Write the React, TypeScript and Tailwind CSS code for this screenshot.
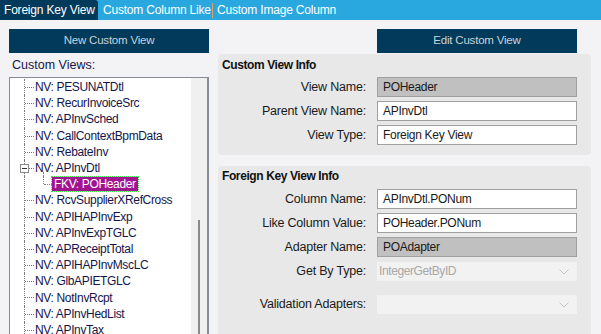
const font = { fontFamily: '"Liberation Sans", Arial, sans-serif' };

const treeItems: { text: string; kind?: 'parent' | 'child' }[] = [
  { text: 'NV: PESUNATDtl' },
  { text: 'NV: RecurInvoiceSrc' },
  { text: 'NV: APInvSched' },
  { text: 'NV: CallContextBpmData' },
  { text: 'NV: RebateInv' },
  { text: 'NV: APInvDtl', kind: 'parent' },
  { text: 'FKV: POHeader', kind: 'child' },
  { text: 'NV: RcvSupplierXRefCross' },
  { text: 'NV: APIHAPInvExp' },
  { text: 'NV: APInvExpTGLC' },
  { text: 'NV: APReceiptTotal' },
  { text: 'NV: APIHAPInvMscLC' },
  { text: 'NV: GlbAPIETGLC' },
  { text: 'NV: NotInvRcpt' },
  { text: 'NV: APInvHedList' },
  { text: 'NV: APInvTax' },
];

function Chevron() {
  return (
    <svg width="10" height="6" viewBox="0 0 10 6" className="absolute right-[8px] top-[7px]">
      <path d="M0.5 0.5 L5 5 L9.5 0.5" fill="none" stroke="#c4c4c4" strokeWidth="1" />
    </svg>
  );
}

function Field({ label, value, gray }: { label: string; value: string; gray?: boolean }) {
  return (
    <div className="flex items-center h-[20px] mb-[4px]">
      <div className="w-[149px] text-right pr-[1px] text-[12.5px] tracking-[-0.2px] text-[#1a1a1a]">{label}</div>
      <div
        className={`ml-[10px] w-[200px] h-[20px] border border-[#a0a0a0] px-[5px] flex items-center text-[12px] tracking-[-0.3px] text-[#1a1a1a] ${
          gray ? 'bg-[#c0c0c0]' : 'bg-white'
        }`}
      >
        {value}
      </div>
    </div>
  );
}

function SelectField({ label, value }: { label: string; value: string }) {
  return (
    <div className="flex items-center h-[20px]">
      <div className="w-[149px] text-right pr-[1px] text-[12.5px] tracking-[-0.2px] text-[#1a1a1a]">{label}</div>
      <div className="relative ml-[10px] w-[200px] h-[19px] bg-[#f2f2f2] px-[2px] flex items-center text-[12px] tracking-[-0.4px] text-[#a8a8a8]">
        {value}
        <Chevron />
      </div>
    </div>
  );
}

export default function App() {
  return (
    <div className="w-[601px] h-[334px] overflow-hidden bg-[#f3f3f5]" style={font}>
      {/* Tabs */}
      <div className="flex h-[20px] bg-[#29a8e0] text-white text-[12px] tracking-[-0.2px] whitespace-nowrap">
        <div className="flex-none w-[98px] bg-[#023a5b] rounded-tr-[3px] flex items-center pl-[4px]">Foreign Key View</div>
        <div className="flex-none w-[114px] flex items-center pl-[5px]">Custom Column Like</div>
        <div className="flex-none w-px h-[15px] mt-[3px] bg-[#d9a46d]" />
        <div className="flex-none flex items-center pl-[4px]">Custom Image Column</div>
      </div>

      <div className="flex pt-[9px]">
        {/* Left column */}
        <div className="ml-[9px] w-[200px] flex flex-col">
          <div className="h-[24px] bg-[#023a5b] text-[#c9d2d9] text-[11.5px] tracking-[-0.2px] flex items-center justify-center">
            New Custom View
          </div>
          <div className="h-[24px] pl-[3px] pt-[3px] text-[12.5px] text-[#15154a]">Custom Views:</div>
          <div className="relative h-[260px] bg-white border border-[#878b96] border-r-[2px] flex">
            <div className="flex-1 pt-[1px]">
              {treeItems.map((it, i) => (
                <div key={i} className="relative h-[16.2px] flex items-center text-[12px] tracking-[-0.35px] text-[#15154a] whitespace-nowrap">
                  <div className="absolute left-[14px] top-0 h-full border-l border-dotted border-[#7a7a7a]" />
                  {it.kind === 'child' ? (
                    <>
                      <div className="absolute left-[33px] top-0 h-[8px] border-l border-dotted border-[#7a7a7a]" />
                      <div className="absolute left-[34px] top-[8px] w-[8px] border-t border-dotted border-[#7a7a7a]" />
                      <div className="ml-[42px] h-[14px] px-[2px] flex items-center bg-[#a1138f] text-white outline outline-1 outline-dotted outline-[#3ddc4a]">
                        {it.text}
                      </div>
                    </>
                  ) : (
                    <>
                      <div className="absolute left-[15px] top-[8px] w-[9px] border-t border-dotted border-[#7a7a7a]" />
                      {it.kind === 'parent' && (
                        <div className="absolute left-[10px] top-[4px] w-[9px] h-[9px] bg-white border border-[#8a8a8a] flex items-center justify-center">
                          <div className="w-[5px] h-px bg-[#333]" />
                        </div>
                      )}
                      {it.kind === 'parent' && (
                        <div className="absolute left-[33px] top-[12px] h-[4px] border-l border-dotted border-[#7a7a7a]" />
                      )}
                      <div className="ml-[25px]">{it.text}</div>
                    </>
                  )}
                </div>
              ))}
            </div>
            {/* scrollbar */}
            <div className="w-[16px] bg-[#f0f0f0] relative">
              <div className="absolute left-[7px] top-[142px] w-[2px] h-[120px] bg-[#8a8a8a]" />
            </div>
          </div>
        </div>

        {/* Right column */}
        <div className="ml-[9px] w-[373px] flex flex-col">
          <div className="ml-[159px] w-[200px] h-[24px] bg-[#023a5b] text-[#c9d2d9] text-[11.5px] tracking-[-0.2px] flex items-center justify-center">
            Edit Custom View
          </div>
          <div className="mt-[1px] h-[101px] bg-[#e8e8e8] rounded-[4px] px-[4px] pt-[1px]">
            <div className="text-[12px] font-bold tracking-[-0.4px] text-[#111] h-[20px] flex items-center">Custom View Info</div>
            <div className="-ml-[4px] mt-[2px]">
              <Field label="View Name:" value="POHeader" gray />
              <Field label="Parent View Name:" value="APInvDtl" />
              <Field label="View Type:" value="Foreign Key View" />
            </div>
          </div>
          <div className="mt-[11px] h-[180px] bg-[#e8e8e8] rounded-[4px] px-[4px]">
            <div className="text-[12px] font-bold tracking-[-0.4px] text-[#111] h-[20px] flex items-center">Foreign Key View Info</div>
            <div className="-ml-[4px] mt-[3px]">
              <Field label="Column Name:" value="APInvDtl.PONum" />
              <Field label="Like Column Value:" value="POHeader.PONum" />
              <Field label="Adapter Name:" value="POAdapter" gray />
              <div className="mt-[1px]">
                <SelectField label="Get By Type:" value="IntegerGetByID" />
              </div>
              <div className="mt-[13px]">
                <SelectField label="Validation Adapters:" value="" />
              </div>
            </div>
          </div>
        </div>
      </div>
    </div>
  );
}
